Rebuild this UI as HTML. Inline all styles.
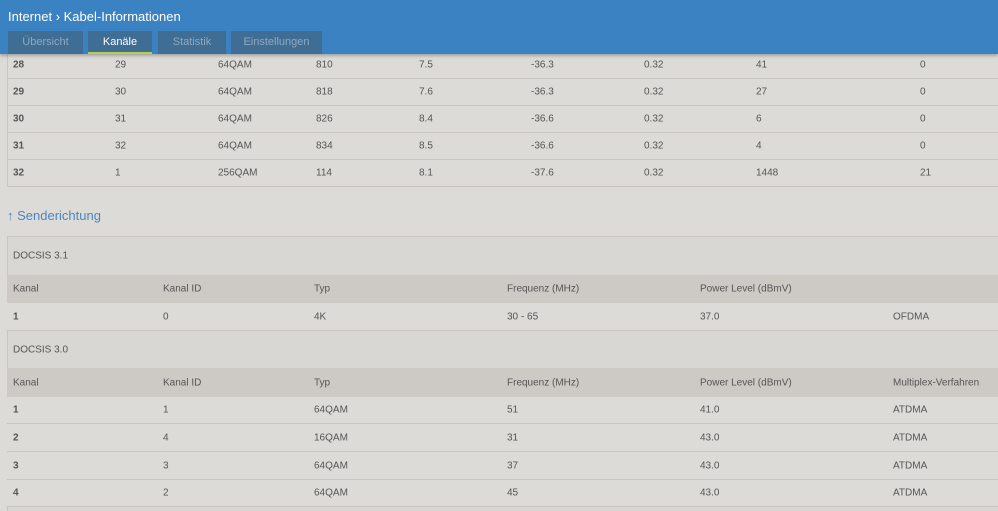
<!DOCTYPE html><html><head><meta charset="utf-8"><style>
*{margin:0;padding:0;box-sizing:border-box}
body{width:998px;height:511px;overflow:hidden;background:#dddbd7;font-family:"Liberation Sans",sans-serif;font-size:10px;color:#555;position:relative}
.hdr{position:absolute;left:0;top:0;width:998px;height:54px;background:#3b82c2;box-shadow:0 2px 3px rgba(0,0,0,.25);z-index:2}
.ttl{position:absolute;left:8px;top:9px;color:#fff;font-size:13px}
.tab{position:absolute;top:31px;height:23px;background:#3f6d94;color:#8fa9c0;font-size:11px;text-align:center;line-height:22px}
.tab.a{color:#fff;border-bottom:2px solid #b5cf4b}
.r{position:absolute;left:7px;width:991px;border-bottom:1px solid #c9c6c1}
.r span{position:absolute;top:50%;transform:translateY(-50%);white-space:nowrap}
.h{background:#cdcac5;border-bottom:none}
.b{font-weight:bold}
.sec{position:absolute;left:7px;color:#4a86c0;font-size:13px;top:208px}
</style></head><body>
<div class="hdr"><div class="ttl">Internet &#x203A; Kabel-Informationen</div>
<div class="tab" style="left:8px;width:75px">Übersicht</div>
<div class="tab a" style="left:88px;width:64px">Kanäle</div>
<div class="tab" style="left:158px;width:68px">Statistik</div>
<div class="tab" style="left:231px;width:91px">Einstellungen</div></div>
<div style="position:absolute;left:7px;top:54px;width:1px;height:133px;background:#c9c6c1"></div>
<div class="r" style="top:52px;height:27px"><span class="b" style="left:6px">28</span><span style="left:108px">29</span><span style="left:211px">64QAM</span><span style="left:309px">810</span><span style="left:412px">7.5</span><span style="left:524px">-36.3</span><span style="left:637px">0.32</span><span style="left:749px">41</span><span style="left:913px">0</span></div>
<div class="r" style="top:79px;height:27px"><span class="b" style="left:6px">29</span><span style="left:108px">30</span><span style="left:211px">64QAM</span><span style="left:309px">818</span><span style="left:412px">7.6</span><span style="left:524px">-36.3</span><span style="left:637px">0.32</span><span style="left:749px">27</span><span style="left:913px">0</span></div>
<div class="r" style="top:106px;height:27px"><span class="b" style="left:6px">30</span><span style="left:108px">31</span><span style="left:211px">64QAM</span><span style="left:309px">826</span><span style="left:412px">8.4</span><span style="left:524px">-36.6</span><span style="left:637px">0.32</span><span style="left:749px">6</span><span style="left:913px">0</span></div>
<div class="r" style="top:133px;height:27px"><span class="b" style="left:6px">31</span><span style="left:108px">32</span><span style="left:211px">64QAM</span><span style="left:309px">834</span><span style="left:412px">8.5</span><span style="left:524px">-36.6</span><span style="left:637px">0.32</span><span style="left:749px">4</span><span style="left:913px">0</span></div>
<div class="r" style="top:160px;height:27px"><span class="b" style="left:6px">32</span><span style="left:108px">1</span><span style="left:211px">256QAM</span><span style="left:309px">114</span><span style="left:412px">8.1</span><span style="left:524px">-37.6</span><span style="left:637px">0.32</span><span style="left:749px">1448</span><span style="left:913px">21</span></div>
<div class="sec">↑ Senderichtung</div>
<div style="position:absolute;left:7px;top:236px;width:991px;height:275px;border-left:1px solid #c9c6c1;border-top:1px solid #c9c6c1;background:#d9d7d3"></div>
<div class="r" style="top:237px;height:38px;border:none"><span style="left:6px">DOCSIS 3.1</span></div>
<div class="r h" style="top:275px;height:28px"><span style="left:6px">Kanal</span><span style="left:156px">Kanal ID</span><span style="left:307px">Typ</span><span style="left:500px">Frequenz (MHz)</span><span style="left:693px">Power Level (dBmV)</span></div>
<div class="r" style="top:303px;height:28px;background:#dddbd7"><span class="b" style="left:6px">1</span><span style="left:156px">0</span><span style="left:307px">4K</span><span style="left:500px">30 - 65</span><span style="left:693px">37.0</span><span style="left:886px">OFDMA</span></div>
<div class="r" style="top:331px;height:37px;border:none"><span style="left:6px">DOCSIS 3.0</span></div>
<div class="r h" style="top:368px;height:29px"><span style="left:6px">Kanal</span><span style="left:156px">Kanal ID</span><span style="left:307px">Typ</span><span style="left:500px">Frequenz (MHz)</span><span style="left:693px">Power Level (dBmV)</span><span style="left:886px">Multiplex-Verfahren</span></div>
<div class="r" style="top:397px;height:27px;background:#dddbd7"><span class="b" style="left:6px">1</span><span style="left:156px">1</span><span style="left:307px">64QAM</span><span style="left:500px">51</span><span style="left:693px">41.0</span><span style="left:886px">ATDMA</span></div>
<div class="r" style="top:424px;height:28px;background:#dddbd7"><span class="b" style="left:6px">2</span><span style="left:156px">4</span><span style="left:307px">16QAM</span><span style="left:500px">31</span><span style="left:693px">43.0</span><span style="left:886px">ATDMA</span></div>
<div class="r" style="top:452px;height:28px;background:#dddbd7"><span class="b" style="left:6px">3</span><span style="left:156px">3</span><span style="left:307px">64QAM</span><span style="left:500px">37</span><span style="left:693px">43.0</span><span style="left:886px">ATDMA</span></div>
<div class="r" style="top:480px;height:27px;background:#dddbd7"><span class="b" style="left:6px">4</span><span style="left:156px">2</span><span style="left:307px">64QAM</span><span style="left:500px">45</span><span style="left:693px">43.0</span><span style="left:886px">ATDMA</span></div>
</body></html>
